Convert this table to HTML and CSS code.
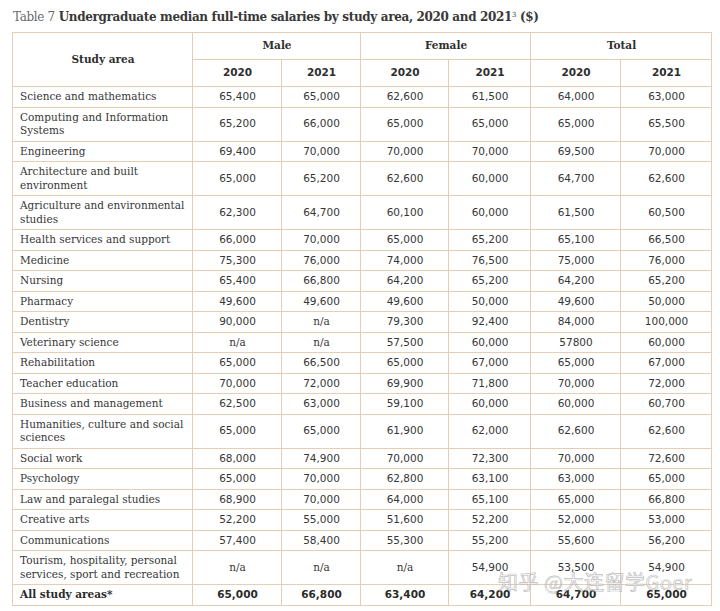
FILE: index.html
```html
<!DOCTYPE html>
<html>
<head>
<meta charset="utf-8">
<link rel="stylesheet" href="styles.css">
</head>
<body>
<div class="page">
  <h1 class="title"><span class="light">Table 7</span> Undergraduate median full-time salaries by study area, 2020 and 2021<sup>3</sup> ($)</h1>
  <table class="salaries">
    <colgroup>
      <col class="c-area"><col class="c-m20"><col class="c-m21"><col class="c-f20"><col class="c-f21"><col class="c-t20"><col class="c-t21">
    </colgroup>
    <thead>
      <tr class="h1">
        <th rowspan="2" class="area-h">Study area</th>
        <th colspan="2">Male</th>
        <th colspan="2">Female</th>
        <th colspan="2">Total</th>
      </tr>
      <tr class="h2">
        <th class="yr">2020</th><th class="yr">2021</th><th class="yr">2020</th><th class="yr">2021</th><th class="yr">2020</th><th class="yr">2021</th>
      </tr>
    </thead>
    <tbody>
      <tr><td>Science and mathematics</td><td>65,400</td><td>65,000</td><td>62,600</td><td>61,500</td><td>64,000</td><td>63,000</td></tr>
      <tr><td>Computing and Information Systems</td><td>65,200</td><td>66,000</td><td>65,000</td><td>65,000</td><td>65,000</td><td>65,500</td></tr>
      <tr><td>Engineering</td><td>69,400</td><td>70,000</td><td>70,000</td><td>70,000</td><td>69,500</td><td>70,000</td></tr>
      <tr><td>Architecture and built environment</td><td>65,000</td><td>65,200</td><td>62,600</td><td>60,000</td><td>64,700</td><td>62,600</td></tr>
      <tr><td>Agriculture and environmental studies</td><td>62,300</td><td>64,700</td><td>60,100</td><td>60,000</td><td>61,500</td><td>60,500</td></tr>
      <tr><td>Health services and support</td><td>66,000</td><td>70,000</td><td>65,000</td><td>65,200</td><td>65,100</td><td>66,500</td></tr>
      <tr><td>Medicine</td><td>75,300</td><td>76,000</td><td>74,000</td><td>76,500</td><td>75,000</td><td>76,000</td></tr>
      <tr><td>Nursing</td><td>65,400</td><td>66,800</td><td>64,200</td><td>65,200</td><td>64,200</td><td>65,200</td></tr>
      <tr><td>Pharmacy</td><td>49,600</td><td>49,600</td><td>49,600</td><td>50,000</td><td>49,600</td><td>50,000</td></tr>
      <tr><td>Dentistry</td><td>90,000</td><td class="na">n/a</td><td>79,300</td><td>92,400</td><td>84,000</td><td>100,000</td></tr>
      <tr><td>Veterinary science</td><td class="na">n/a</td><td class="na">n/a</td><td>57,500</td><td>60,000</td><td>57800</td><td>60,000</td></tr>
      <tr><td>Rehabilitation</td><td>65,000</td><td>66,500</td><td>65,000</td><td>67,000</td><td>65,000</td><td>67,000</td></tr>
      <tr><td>Teacher education</td><td>70,000</td><td>72,000</td><td>69,900</td><td>71,800</td><td>70,000</td><td>72,000</td></tr>
      <tr><td>Business and management</td><td>62,500</td><td>63,000</td><td>59,100</td><td>60,000</td><td>60,000</td><td>60,700</td></tr>
      <tr><td>Humanities, culture and social sciences</td><td>65,000</td><td>65,000</td><td>61,900</td><td>62,000</td><td>62,600</td><td>62,600</td></tr>
      <tr><td>Social work</td><td>68,000</td><td>74,900</td><td>70,000</td><td>72,300</td><td>70,000</td><td>72,600</td></tr>
      <tr><td>Psychology</td><td>65,000</td><td>70,000</td><td>62,800</td><td>63,100</td><td>63,000</td><td>65,000</td></tr>
      <tr><td>Law and paralegal studies</td><td>68,900</td><td>70,000</td><td>64,000</td><td>65,100</td><td>65,000</td><td>66,800</td></tr>
      <tr><td>Creative arts</td><td>52,200</td><td>55,000</td><td>51,600</td><td>52,200</td><td>52,000</td><td>53,000</td></tr>
      <tr><td>Communications</td><td>57,400</td><td>58,400</td><td>55,300</td><td>55,200</td><td>55,600</td><td>56,200</td></tr>
      <tr><td>Tourism, hospitality, personal services, sport and recreation</td><td class="na">n/a</td><td class="na">n/a</td><td class="na">n/a</td><td>54,900</td><td>53,500</td><td>54,900</td></tr>
      <tr class="total"><td>All study areas*</td><td>65,000</td><td>66,800</td><td>63,400</td><td>64,200</td><td>64,700</td><td>65,000</td></tr>
    </tbody>
  </table>
  <div class="watermark">知乎 @大连留学Goer</div>
</div>
</body>
</html>
```

FILE: styles.css
```css
html, body {
  margin: 0;
  padding: 0;
  background: #ffffff;
}
.page {
  position: relative;
  width: 720px;
  height: 611px;
  padding: 8px 0 0 12px;
  box-sizing: border-box;
  overflow: hidden;
}
.title {
  margin: 0 0 5px 1px;
  font-family: "DejaVu Serif", serif;
  font-weight: bold;
  font-size: 12px;
  letter-spacing: -0.35px;
  line-height: 19px;
  color: #383838;
  white-space: nowrap;
}
.title .light {
  font-weight: normal;
  color: #6a6a6a;
}
.title sup {
  font-size: 7px;
  font-weight: normal;
  vertical-align: 4px;
  line-height: 0;
}
.salaries {
  border-collapse: collapse;
  table-layout: fixed;
  width: 699px;
  color: #363636;
}
.c-area { width: 180px; }
.c-m20 { width: 89px; }
.c-m21 { width: 79px; }
.c-f20 { width: 88px; }
.c-f21 { width: 82px; }
.c-t20 { width: 90px; }
.c-t21 { width: 91px; }
.salaries th,
.salaries td {
  border: 1px solid #e6cdb3;
  padding: 3px 6px 3px 7px;
  line-height: 13.5px;
  text-align: center;
  vertical-align: middle;
}
.salaries th {
  font-family: "DejaVu Serif", serif;
  font-weight: bold;
  font-size: 10.5px;
  color: #2e2e2e;
}
.salaries .h1 th { height: 20px; padding-top: 3px; padding-bottom: 3px; }
.salaries .h2 th { height: 20px; padding-top: 3px; padding-bottom: 3px; }
.salaries th.yr {
  font-family: "DejaVu Sans", sans-serif;
  font-size: 10.5px;
}
.salaries td {
  font-family: "DejaVu Sans", sans-serif;
  font-size: 10.5px;
}
.salaries td:first-child {
  text-align: left;
  font-family: "DejaVu Serif", serif;
  font-size: 10.5px;
}
.salaries td.na {
  font-family: "DejaVu Serif", serif;
}
.salaries .total td {
  font-weight: bold;
  color: #2a2a2a;
}
.watermark {
  position: absolute;
  left: 498px;
  top: 570px;
  font-family: "Noto Sans CJK SC", sans-serif;
  font-size: 20px;
  line-height: 24px;
  color: rgba(255, 255, 255, 0.5);
  -webkit-text-stroke: 0.7px rgba(120, 120, 120, 0.5);
  letter-spacing: 0.5px;
  white-space: nowrap;
}
```
